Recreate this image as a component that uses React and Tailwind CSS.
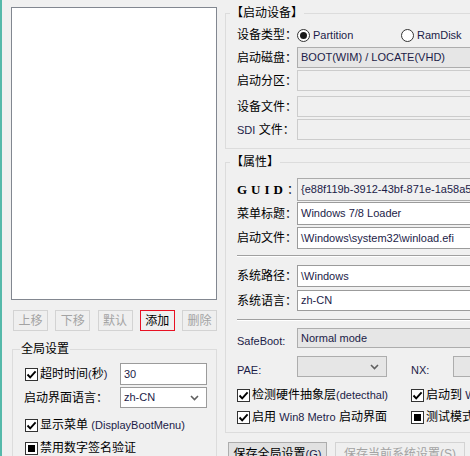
import React from 'react'

const LAT = 'text-[11px] text-[#1c1c48]'

function L({ children }) {
    return <span className={LAT}>{children}</span>
}

function Check({ state }) {
    return (
        <span className="w-[13px] h-[13px] border border-[#333333] bg-white flex items-center justify-center shrink-0">
            {state === 'on' &&
                <svg width="11" height="11" viewBox="0 0 11 11">
                    <path d="M1.5 5.5 L4.2 8.3 L9.6 2.4" stroke="#000" strokeWidth="1.9" fill="none" />
                </svg>
            }
            {state === 'mixed' && <span className="w-[7px] h-[7px] bg-black" />}
        </span>
    )
}

function Radio({ checked }) {
    return (
        <span className="w-[13px] h-[13px] rounded-full border border-[#333333] bg-white flex items-center justify-center shrink-0">
            {checked && <span className="w-[7px] h-[7px] rounded-full bg-[#1a1a1a]" />}
        </span>
    )
}

function Chevron() {
    return (
        <svg width="9" height="6" viewBox="0 0 9 6" className="shrink-0">
            <path d="M1 1 L4.5 4.5 L8 1" stroke="#606060" strokeWidth="1.6" fill="none" />
        </svg>
    )
}

// kind: edit | combo | disabled | readonly
function Box({ kind, className, children, chevron }) {
    let look = 'bg-white border-[#9b9b9b]'
    if (kind === 'combo') look = 'bg-[#e6e6e6] border-[#adadad]'
    if (kind === 'disabled') look = 'bg-[#f0f0f0] border-[#cccccc]'
    if (kind === 'readonly') look = 'bg-[#f0f0f0] border-[#ababab]'
    return (
        <div className={`border ${look} flex items-center pl-[3px] pr-[7px] overflow-hidden whitespace-nowrap shrink-0 ${className}`}>
            <span className={`${LAT} flex-1 text-[#0a0a30]`}>{children}</span>
            {chevron && <Chevron />}
        </div>
    )
}

function Btn({ children, disabled, red, className }) {
    let look = 'bg-[#e1e1e1] border-[#adadad] text-black'
    if (disabled) look = 'bg-[#efefef] border-[#d3d3d3] text-[#a3a3a3]'
    if (red) look = 'bg-[#f0f0f0] border-[#e81123] text-black'
    return (
        <div className={`border ${look} flex items-center justify-center text-[12px] whitespace-nowrap shrink-0 ${className}`}>
            {children}
        </div>
    )
}

function Row({ label, children, className }) {
    return (
        <div className={`flex items-center ${className}`}>
            <div className="w-[60px] shrink-0 text-[12px] leading-[16px] whitespace-nowrap">{label}</div>
            {children}
        </div>
    )
}

function Group({ title, className, children }) {
    return (
        <fieldset className={`border border-[#dcdcdc] shrink-0 ${className}`}>
            <legend className="ml-[4px] px-[1px] text-[12px] leading-[16px]">{title}</legend>
            {children}
        </fieldset>
    )
}

export default function App() {
    return (
        <div className="w-[470px] h-[456px] bg-[#f0f0f0] overflow-hidden relative flex items-start text-black font-['Liberation_Sans','Noto_Sans_CJK_SC',sans-serif]">
            <div className="w-[2px] h-full bg-[#55b9aa] shrink-0" />

            {/* left column */}
            <div className="ml-[9px] w-[206px] shrink-0 flex flex-col pt-[7px]">
                <div className="h-[293px] border border-[#828790] bg-white shrink-0" />

                <div className="mt-[10px] pl-[2px] flex justify-between shrink-0">
                    <Btn disabled className="w-[35px] h-[21px]">上移</Btn>
                    <Btn disabled className="w-[35px] h-[21px]">下移</Btn>
                    <Btn disabled className="w-[35px] h-[21px]">默认</Btn>
                    <Btn red className="w-[35px] h-[21px]">添加</Btn>
                    <Btn disabled className="w-[35px] h-[21px]">删除</Btn>
                </div>

                <fieldset className="mt-[10px] ml-[1px] w-[205px] h-[130px] border border-[#dcdcdc] shrink-0">
                    <legend className="ml-[7px] px-[1px] text-[12px] leading-[16px]">全局设置</legend>
                    <div className="pl-[12px] pt-[6px]">
                        <div className="flex items-center h-[22px]">
                            <div className="w-[95px] flex items-center gap-[2px] text-[12px] whitespace-nowrap">
                                <Check state="on" />
                                <span>超时时间<L>(</L>秒<L>)</L></span>
                            </div>
                            <Box kind="edit" className="w-[87px] h-[22px]">30</Box>
                        </div>
                        <div className="flex items-center h-[21px] mt-[2px]">
                            <div className="w-[95px] -ml-[1px] mr-[1px] text-[12px] whitespace-nowrap">启动界面语言：</div>
                            <Box kind="edit" chevron className="w-[87px] h-[21px]">zh-CN</Box>
                        </div>
                        <div className="flex items-center gap-[2px] h-[14px] mt-[10px] text-[12px] whitespace-nowrap">
                            <Check state="on" />
                            <span>显示菜单 <L>(DisplayBootMenu)</L></span>
                        </div>
                        <div className="flex items-center gap-[2px] h-[14px] mt-[9px] text-[12px] whitespace-nowrap">
                            <Check state="mixed" />
                            <span>禁用数字签名验证</span>
                        </div>
                    </div>
                </fieldset>
            </div>

            {/* right column */}
            <div className="ml-[8px] w-[270px] shrink-0 flex flex-col pt-[5px]">
                <Group title="【启动设备】" className="pb-[8px]">
                    <div className="pl-[11px]">
                        <Row label="设备类型：" className="h-[20px] mt-[4px]">
                            <div className="flex items-center gap-[3px] w-[104px]">
                                <Radio checked />
                                <L>Partition</L>
                            </div>
                            <div className="flex items-center gap-[3px]">
                                <Radio />
                                <L>RamDisk</L>
                            </div>
                        </Row>
                        <Row label="启动磁盘：" className="mt-[2px]">
                            <Box kind="combo" className="flex-1 h-[21px]">BOOT(WIM) / LOCATE(VHD)</Box>
                        </Row>
                        <Row label="启动分区：" className="mt-[2px]">
                            <Box kind="disabled" className="flex-1 h-[21px]" />
                        </Row>
                        <Row label="设备文件：" className="mt-[5px]">
                            <Box kind="disabled" className="flex-1 h-[21px]" />
                        </Row>
                        <Row label={<span><L>SDI</L> 文件：</span>} className="mt-[2px]">
                            <Box kind="disabled" className="flex-1 h-[21px]" />
                        </Row>
                    </div>
                </Group>

                <Group title="【属性】" className="mt-[5px] pb-[5px]">
                    <div className="pl-[11px]">
                        <Row label={<span className="font-['Liberation_Serif','Noto_Sans_CJK_SC',serif] font-bold text-[13px] tracking-[4px]">GUID<span className="tracking-normal font-['Noto_Sans_CJK_SC',sans-serif] font-normal text-[12px]">：</span></span>} className="mt-[8px]">
                            <Box kind="readonly" className="flex-1 h-[23px]">{'{e88f119b-3912-43bf-871e-1a58a5c6d2a1}'}</Box>
                        </Row>
                        <Row label="菜单标题：" className="mt-[1px]">
                            <Box kind="edit" className="flex-1 h-[23px]">Windows 7/8 Loader</Box>
                        </Row>
                        <Row label="启动文件：" className="mt-[2px]">
                            <Box kind="edit" className="flex-1 h-[22px]">\Windows\system32\winload.efi</Box>
                        </Row>
                        <div className="mt-[6px] border-t border-[#a0a0a0] border-b border-b-white" />
                        <Row label="系统路径：" className="mt-[8px]">
                            <Box kind="edit" className="flex-1 h-[22px]">\Windows</Box>
                        </Row>
                        <Row label="系统语言：" className="mt-[3px]">
                            <Box kind="edit" className="flex-1 h-[21px]">zh-CN</Box>
                        </Row>
                        <div className="mt-[8px] border-t border-[#a0a0a0] border-b border-b-white" />
                        <div className="flex mt-[7px] h-[20px]">
                            <div className="w-[60px] h-[20px] flex items-end leading-[13px]"><L>SafeBoot:</L></div>
                            <Box kind="combo" className="flex-1 h-[20px]">Normal mode</Box>
                        </div>
                        <div className="flex mt-[8px] h-[21px]">
                            <div className="w-[60px] h-[21px] flex items-end leading-[13px]"><L>PAE:</L></div>
                            <Box kind="combo" chevron className="w-[90px] h-[21px]" />
                            <div className="ml-[24px] w-[42px] h-[21px] flex items-end leading-[13px]"><L>NX:</L></div>
                            <Box kind="combo" className="flex-1 h-[21px]" />
                        </div>
                        <div className="flex items-center h-[20px] mt-[8px] text-[12px] whitespace-nowrap">
                            <div className="w-[174px] flex items-center gap-[2px]">
                                <Check state="on" />
                                <span>检测硬件抽象层<L>(detecthal)</L></span>
                            </div>
                            <div className="flex items-center gap-[2px]">
                                <Check state="on" />
                                <span>启动到 <L>WinPE</L></span>
                            </div>
                        </div>
                        <div className="flex items-center h-[20px] mt-[2px] text-[12px] whitespace-nowrap">
                            <div className="w-[174px] flex items-center gap-[2px]">
                                <Check state="on" />
                                <span>启用 <L>Win8 Metro</L> 启动界面</span>
                            </div>
                            <div className="flex items-center gap-[2px]">
                                <Check state="mixed" />
                                <span>测试模式</span>
                            </div>
                        </div>
                    </div>
                </Group>

                <div className="flex mt-[9px] ml-[3px] gap-[8px] shrink-0">
                    <Btn className="w-[99px] h-[24px]">保存全局设置<L>(G)</L></Btn>
                    <Btn disabled className="w-[130px] h-[24px]">保存当前系统设置(S)</Btn>
                </div>
            </div>
        </div>
    )
}
